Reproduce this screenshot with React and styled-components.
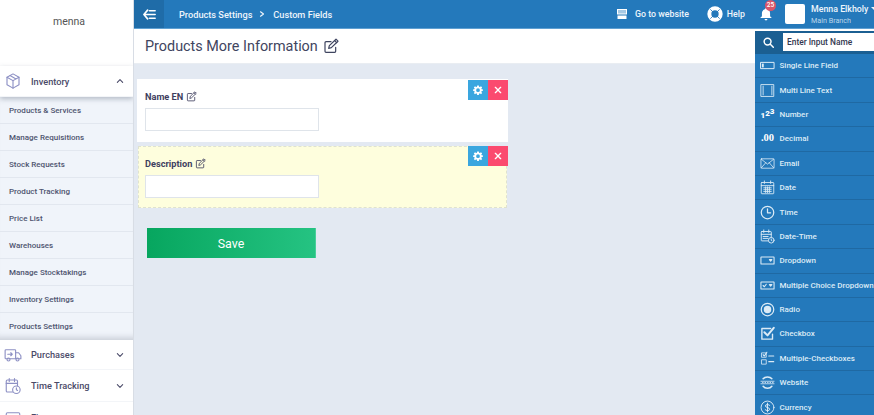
import React from 'react';
import styled, { createGlobalStyle } from 'styled-components';

const Global = createGlobalStyle`
html, body { margin: 0; padding: 0; height: 100%; overflow: hidden; }
body { font-family: Roboto, "Liberation Sans", sans-serif; background: #e3e9f2; }
* { box-sizing: border-box; }
`;

const Page = styled.div`
display: flex;
width: 874px;
height: 415px;
overflow: hidden;
`;
const Sidebar = styled.aside`
width: 134px;
flex-shrink: 0;
background: #fff;
border-right: 1px solid #d8dde5;
display: flex;
flex-direction: column;
overflow: hidden;
`;
const Logo = styled.div`
height: 66px;
flex-shrink: 0;
padding: 14px 0 0 5px;
text-align: center;
font-size: 10.5px;
line-height: 16px;
color: #555;
`;
const MenuRow = styled.div`
height: ${p => p.$h}px;
flex-shrink: 0;
display: flex;
align-items: center;
padding: 0 9px 0 4px;
background: #fff;
border-bottom: 1px solid #f3f5f8;
font-size: 9.2px;
font-weight: 500;
color: #4a4a68;
position: relative;
box-shadow: ${p => p.$open ? '0 2px 5px rgba(70,80,100,.35)' : 'none'};
svg.ico { width: 18px; height: 18px; flex-shrink: 0; margin-right: 9px; color: #8d90c4; }
span { flex: 1; }
svg.chev { width: 8px; height: 8px; color: #4a4a68; margin-right: 0; }
`;
const SubMenu = styled.div`
flex-shrink: 0;
height: 243px;
overflow: hidden;
background: #f0f4fa;
box-shadow: inset 0 -8px 6px -6px rgba(70,80,100,.25);
`;
const SubItem = styled.div`
height: 27px;
padding-left: 9px;
display: flex;
align-items: center;
font-size: 8px;
font-weight: 500;
color: #4f5570;
border-bottom: 1px solid #e2e7ef;
&:last-child { border-bottom: 0; }
`;
const Main = styled.div`
flex: 1;
min-width: 0;
display: flex;
flex-direction: column;
`;
const Topbar = styled.header`
height: 29px;
flex-shrink: 0;
background: #2479bb;
border-bottom: 1px solid #5fa0d2;
display: flex;
align-items: center;
color: #eef5fb;
`;
const Toggle = styled.div`
width: 30px;
height: 28px;
background: #1f6ca8;
display: flex;
align-items: center;
justify-content: center;
`;
const Crumbs = styled.div`
display: flex;
align-items: center;
margin-left: 15px;
font-size: 9.2px;
font-weight: 500;
flex: 1;
svg { width: 6px; height: 8px; margin: 0 8px 0 7px; }
`;
const TopLink = styled.div`
display: flex;
align-items: center;
gap: ${p => p.$gap}px;
font-size: 8.8px;
font-weight: 500;
margin-right: ${p => p.$mr}px;
`;
const Bell = styled.div`
position: relative;
width: 16px;
height: 20px;
margin-right: 10px;
display: flex;
align-items: center;
`;
const Badge = styled.b`
position: absolute;
top: -4px;
left: 6px;
width: 11px;
height: 11px;
border-radius: 50%;
background: #d9566a;
color: #fff;
font-size: 6.5px;
font-weight: 500;
line-height: 11px;
text-align: center;
`;
const Avatar = styled.div`
width: 20px;
height: 20px;
border-radius: 2px;
background: #fff;
margin-right: 6px;
`;
const User = styled.div`
width: 63px;
white-space: nowrap;
div { font-size: 8.8px; font-weight: 500; line-height: 12px; }
small { display: block; font-size: 7.2px; line-height: 11px; color: #bcd6ea; }
`;
const Caret = styled.i`
display: inline-block;
margin-left: 3px;
vertical-align: 2px;
border: 3px solid transparent;
border-top-color: #eef5fb;
border-bottom: 0;
`;
const Body = styled.div`
flex: 1;
display: flex;
min-height: 0;
`;
const Content = styled.main`
flex: 1;
min-width: 0;
`;
const TitleBar = styled.div`
height: 35px;
background: #fff;
border-bottom: 1px solid #e9edf2;
display: flex;
align-items: center;
padding: 0 0 0 11px;
gap: 5px;
font-size: 14.4px;
color: #3f4560;
svg { width: 16px; height: 16px; }
`;
const Fields = styled.div`
padding: 15px 0 0 3px;
`;
const FieldCard = styled.div`
position: relative;
width: ${p => p.$dashed ? 369 : 371}px;
height: ${p => p.$dashed ? 62 : 63}px;
margin: 0 0 ${p => p.$dashed ? 0 : 4}px ${p => p.$dashed ? 1 : 0}px;
padding: ${p => p.$dashed ? 9 : 10}px 0 0 ${p => p.$dashed ? 6 : 8}px;
background: ${p => p.$dashed ? '#fefedd' : '#fff'};
border: ${p => p.$dashed ? '1px dashed #dfe2d0' : '0'};
`;
const Label = styled.label`
display: flex;
align-items: center;
gap: 3px;
height: 14px;
font-size: 9.2px;
font-weight: 700;
color: #3f3f5f;
svg { width: 11px; height: 11px; }
`;
const Input = styled.input`
display: block;
width: 174px;
height: 23px;
margin-top: 5px;
background: #fff;
border: 1px solid #dfe4ea;
outline: 0;
`;
const Actions = styled.div`
position: absolute;
top: ${p => p.$top}px;
right: ${p => p.$right}px;
display: flex;
`;
const ActionBtn = styled.div`
width: 20px;
height: 20px;
background: ${p => p.$bg};
display: flex;
align-items: center;
justify-content: center;
svg { width: 10px; height: 10px; }
`;
const SaveBtn = styled.button`
display: block;
width: 169px;
height: 30px;
margin: 20px 0 0 10px;
border: 0;
border-right: 1px solid #48cf9a;
background: linear-gradient(90deg, #07a65f, #25c382);
color: #fff;
font-family: Roboto, sans-serif;
font-size: 12.4px;
font-weight: 400;
`;
const Panel = styled.div`
width: 119px;
flex-shrink: 0;
border-top: 2px solid #fff;
background: #2479bb;
overflow: hidden;
`;
const SearchRow = styled.div`
height: 23px;
display: flex;
align-items: flex-start;
background: #1b5f92;
padding: 2px 0 0 28px;
position: relative;
svg { position: absolute; left: 8px; top: 6px; width: 11px; height: 11px; }
`;
const SearchInput = styled.input`
width: 100%;
height: 18px;
padding: 0 0 0 4px;
border: 0;
outline: 0;
background: #fff;
color: #33384f;
font-family: Roboto, sans-serif;
font-size: 8.4px;
font-weight: 500;
&::placeholder { color: #33384f; opacity: 1; }
`;
const FieldType = styled.div`
height: 24.4px;
display: flex;
align-items: center;
padding-left: 5px;
font-size: 8px;
font-weight: 500;
color: #dcebf6;
white-space: nowrap;
border-bottom: 1px solid #1f69a3;
> svg, > em { width: 15px; height: 15px; margin-right: 4.5px; flex-shrink: 0; }
> em { font-family: "Liberation Serif", serif; font-weight: 700; font-style: normal; font-size: 10.5px; line-height: 14px; color: #fff; text-align: center; }
`;
const Digits = styled.em`
display: flex;
align-items: center;
justify-content: center;
`;
const Digit = styled.span`
font-family: Roboto, sans-serif;
font-size: 8px;
font-weight: 900;
line-height: 8px;
transform: translateY(${p => p.$up}px);
`;

const Stroke = ({ children, w = 1.5, box = 24, ...rest }) => (
  <svg viewBox={`0 0 ${box} ${box}`} fill="none" stroke="currentColor" strokeWidth={w} strokeLinecap="round" strokeLinejoin="round" {...rest}>{children}</svg>
);

const EditIcon = () => (
  <Stroke w={1.8}>
    <path d="M19 14v6a1.500 1.500 0 0 1-1.500 1.500h-13A1.500 1.500 0 0 1 3 20V7a1.500 1.500 0 0 1 1.500-1.500H12" />
    <path d="M8.500 15.500l1-4L19.500 1.800l3 3L12.500 14.500z" />
    <path d="M17.500 4l3 3" />
  </Stroke>
);
const Chevron = ({ up }) => (
  <Stroke className="chev" box={12} w={1.6}><path d={up ? 'M2 8l4-4 4 4' : 'M2 4l4 4 4-4'} /></Stroke>
);
const Box = () => (
  <Stroke className="ico" w={1.500}>
    <path d="M12 2.500l8 4.500v10l-8 4.500-8-4.500V7z" /><path d="M4 7l8 4.500L20 7M12 11.500v10M8 4.800l8 4.500" />
  </Stroke>
);
const Truck = () => (
  <Stroke className="ico" w={1.500}>
    <rect x="1.500" y="5" width="14" height="12" rx="1" /><path d="M15.500 9h4l3 4v4h-7" /><circle cx="6" cy="18" r="2" /><circle cx="18" cy="18" r="2" /><path d="M5 11h6M9 9l2 2-2 2" />
  </Stroke>
);
const CalClock = () => (
  <Stroke className="ico" w={1.500}>
    <rect x="3" y="4" width="15" height="16" rx="1.500" /><path d="M3 8.500h15M7 2v4M14 2v4" /><circle cx="16.500" cy="17" r="5" fill="#fff" /><path d="M16.500 14.500V17l1.600 1" />
  </Stroke>
);
const Card = () => (
  <Stroke className="ico" w={1.500}><rect x="3" y="5" width="18" height="14" rx="1.500" /><path d="M3 10h18" /></Stroke>
);

const icons = {
  single: <Stroke w={1.6}><rect x="1.500" y="7" width="21" height="10" /><rect x="3" y="9" width="3" height="6" fill="currentColor" stroke="none" /></Stroke>,
  multi: <Stroke w={1.4}><rect x="2" y="2.500" width="20" height="19" /><path d="M5 5v14M19 5v14" /></Stroke>,
  email: <Stroke w={1.3}><rect x="1.500" y="4.500" width="21" height="15" rx="1" /><path d="M2 5l10 8 10-8M2 19l7-8M22 19l-7-8" /></Stroke>,
  date: <Stroke w={1.4}><rect x="2" y="4" width="20" height="18" rx="1" /><path d="M2 9h20M7 1.500v4M17 1.500v4M6 12.500h12M6 15.500h12M6 18.500h12M9 11v9M12 11v9M15 11v9" /></Stroke>,
  time: <Stroke w={2}><circle cx="12" cy="12" r="10" /><path d="M12 6v6.500h5" /></Stroke>,
  dateTime: <Stroke w={1.5}><rect x="2" y="4" width="16" height="15" rx="1" /><path d="M2 8.500h16M6 1.500v4M14 1.500v4M5 12h8M5 15h8" /><circle cx="18" cy="18" r="4.500" fill="#2479bb" /><path d="M18 16v2.200l1.300.8" /></Stroke>,
  dropdown: <Stroke w={1.7}><rect x="1.500" y="6.500" width="21" height="11" rx=".5" /><path d="M15 10.500h4l-2 2.500z" fill="currentColor" /></Stroke>,
  multiple: <Stroke w={1.7}><rect x="1.500" y="6.500" width="21" height="11" rx=".5" /><path d="M5 12l2 2 3-4M15 10.500h4l-2 2.500z" /></Stroke>,
  radio: <Stroke w={2}><circle cx="12" cy="12" r="10" /><circle cx="12" cy="12" r="5" fill="currentColor" /></Stroke>,
  checkbox: <Stroke w={2.2}><path d="M20 13v8H3V4h14" /><path d="M7 10l5 5L22 3" strokeWidth="3.200" /></Stroke>,
  checkboxes: <Stroke w={1.3}><rect x="3" y="3" width="7" height="7" /><rect x="3" y="14" width="7" height="7" /><path d="M5 6l2 2 4-6M14 8h8M14 17h8" strokeWidth="1.700" /></Stroke>,
  website: <Stroke w={1.3}><path d="M5 6c3-4 11-4 14 0M5 18c3 4 11 4 14 0" strokeWidth="2.400" /><path d="M1.500 10h21M1.500 14h21M4 12h1M8 12h1M12 12h1M16 12h1M20 12h1" /></Stroke>,
  currency: <Stroke w={1.5}><circle cx="12" cy="12" r="10.300" /><path d="M15.500 8.500c-1-1.500-7-2-7 1s7 2 7 5.200-6 2.800-7.300.8M12 5v14" /></Stroke>,
};

const subItems = ['Products & Services', 'Manage Requisitions', 'Stock Requests', 'Product Tracking', 'Price List', 'Warehouses', 'Manage Stocktakings', 'Inventory Settings', 'Products Settings'];
const fieldTypes = [
  ['Single Line Field', icons.single],
  ['Multi Line Text', icons.multi],
  ['Number', <Digits key="n"><Digit $up={2}>1</Digit><Digit $up={0}>2</Digit><Digit $up={-2}>3</Digit></Digits>],
  ['Decimal', <em key="d">.00</em>],
  ['Email', icons.email],
  ['Date', icons.date],
  ['Time', icons.time],
  ['Date-Time', icons.dateTime],
  ['Dropdown', icons.dropdown],
  ['Multiple Choice Dropdown', icons.multiple],
  ['Radio', icons.radio],
  ['Checkbox', icons.checkbox],
  ['Multiple-Checkboxes', icons.checkboxes],
  ['Website', icons.website],
  ['Currency', icons.currency],
];

const CardActions = ({ top, right }) => (
  <Actions $top={top} $right={right}>
    <ActionBtn $bg="#3aa6df">
      <svg viewBox="0 0 24 24" fill="#fff"><path fillRule="evenodd" d="M10 1h4l.6 3.200 1.900.8L19.200 3 22 5.800 20 8.500l.8 1.900L24 11v3l-3.200.6-.8 1.900 2 2.700-2.800 2.800-2.700-2-1.900.8L14 24h-4l-.6-3.200-1.900-.8-2.700 2L2 19.200l2-2.700-.8-1.900L0 14v-3l3.200-.6.8-1.900-2-2.700L4.800 3l2.700 2 1.900-.8zM12 8a4.500 4.500 0 1 0 0 9 4.500 4.500 0 0 0 0-9z" /></svg>
    </ActionBtn>
    <ActionBtn $bg="#fb4a6f">
      <Stroke w={4} style={{ color: '#fff', width: 8, height: 8 }}><path d="M4 4l16 16M20 4L4 20" /></Stroke>
    </ActionBtn>
  </Actions>
);

export default function App() {
  return (
    <Page>
      <Global />
      <Sidebar>
        <Logo>menna</Logo>
        <MenuRow $h={31} $open><Box /><span>Inventory</span><Chevron up /></MenuRow>
        <SubMenu>
          {subItems.map(item => <SubItem key={item}>{item}</SubItem>)}
        </SubMenu>
        <MenuRow $h={30}><Truck /><span>Purchases</span><Chevron /></MenuRow>
        <MenuRow $h={32}><CalClock /><span>Time Tracking</span><Chevron /></MenuRow>
        <MenuRow $h={32}><Card /><span>Finance</span><Chevron /></MenuRow>
      </Sidebar>
      <Main>
        <Topbar>
          <Toggle>
            <Stroke w={2.6} style={{ width: 15, height: 15, color: '#fff' }}><path d="M9 5l-6 7 6 7M3 12h18M12 6h9M12 18h9" /></Stroke>
          </Toggle>
          <Crumbs>
            Products Settings
            <Stroke box={6} w={1.200}><path d="M1.500 .8L4.500 3 1.500 5.200" /></Stroke>
            Custom Fields
          </Crumbs>
          <TopLink $mr={18} $gap={7}>
            <svg viewBox="0 0 24 24" width="12" height="12" fill="#fff"><path d="M2 2h20v11H2zM3 15h18v7H3z" /><path d="M6 4v7M10 4v7M14 4v7M18 4v7" stroke="#2479bb" strokeWidth="1.600" /></svg>
            Go to website
          </TopLink>
          <TopLink $mr={14} $gap={4}>
            <svg viewBox="0 0 24 24" width="16" height="16" fill="none">
              <circle cx="12" cy="12" r="8.500" stroke="#fff" strokeWidth="6" />
              <path d="M5 5l4.500 4.500M19 5l-4.500 4.500M5 19l4.500-4.500M19 19l-4.500-4.500" stroke="#2479bb" strokeWidth="1.300" />
            </svg>
            Help
          </TopLink>
          <Bell>
            <svg viewBox="0 0 24 24" width="14" height="16" fill="#fff"><path d="M12 2a2 2 0 0 1 2 2c3.500 1 5 3.500 5 7v5l3 3H2l3-3v-5c0-3.500 1.500-6 5-7a2 2 0 0 1 2-2zM9.500 20.500h5a2.500 2.500 0 0 1-5 0z" /></svg>
            <Badge>25</Badge>
          </Bell>
          <Avatar />
          <User>
            <div>Menna Elkholy<Caret /></div>
            <small>Main Branch</small>
          </User>
        </Topbar>
        <Body>
          <Content>
            <TitleBar>Products More Information <EditIcon /></TitleBar>
            <Fields>
              <FieldCard>
                <Label>Name EN <EditIcon /></Label>
                <Input />
                <CardActions top={1} right={0} />
              </FieldCard>
              <FieldCard $dashed>
                <Label>Description <EditIcon /></Label>
                <Input />
                <CardActions top={-1} right={-2} />
              </FieldCard>
              <SaveBtn>Save</SaveBtn>
            </Fields>
          </Content>
          <Panel>
            <SearchRow>
              <Stroke w={3.200} style={{ color: '#fff' }}><circle cx="10" cy="10" r="7.500" /><path d="M16 16l6.500 6.500" /></Stroke>
              <SearchInput placeholder="Enter Input Name" />
            </SearchRow>
            {fieldTypes.map(([name, icon]) => <FieldType key={name}>{icon}{name}</FieldType>)}
          </Panel>
        </Body>
      </Main>
    </Page>
  );
}
